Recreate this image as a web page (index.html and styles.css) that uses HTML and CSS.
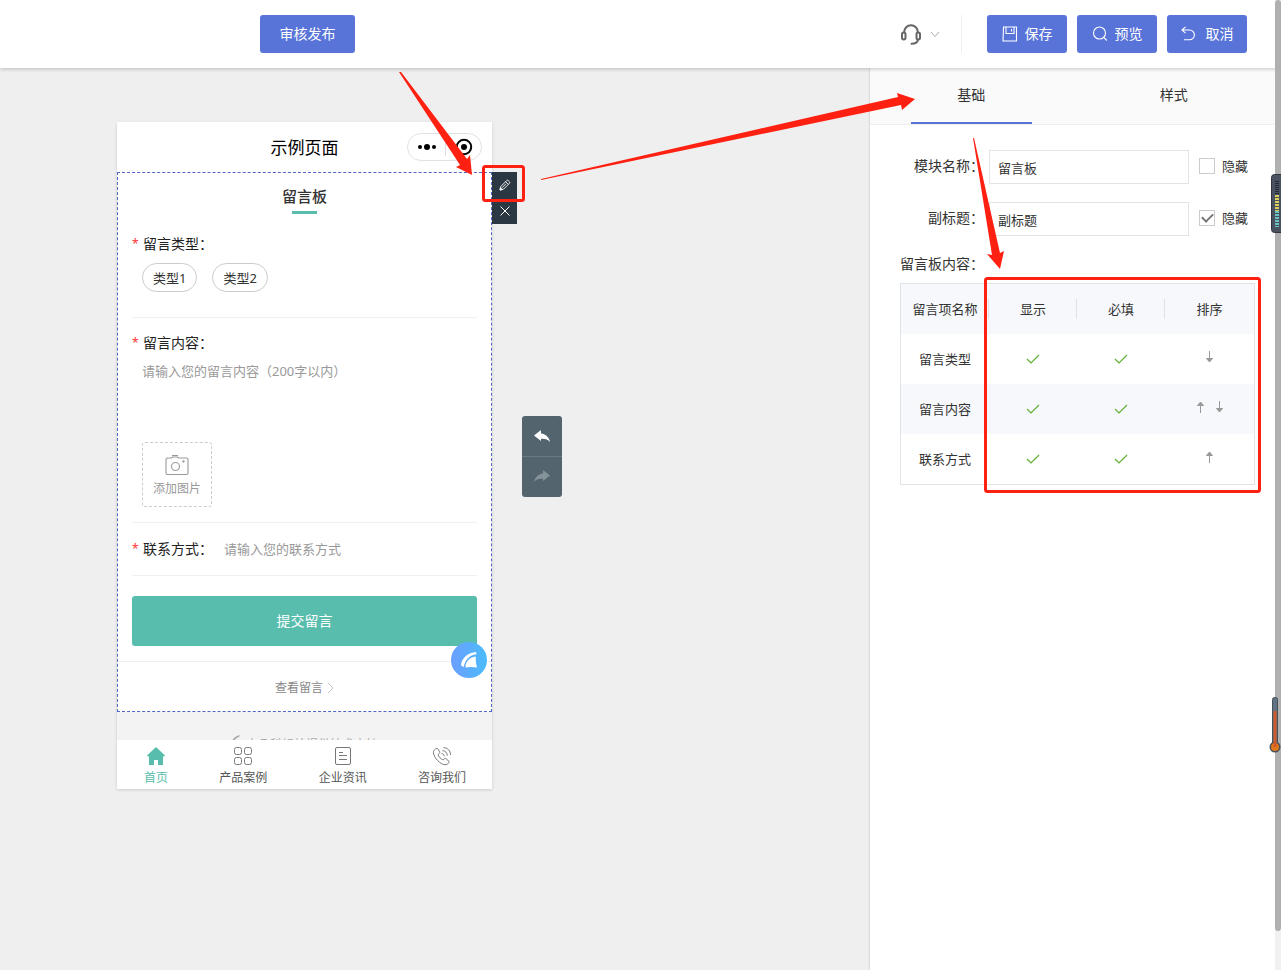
FILE: index.html
```html
<!DOCTYPE html>
<html lang="zh-CN">
<head>
<meta charset="utf-8">
<title>示例页面</title>
<link rel="stylesheet" href="styles.css">
</head>
<body>
<header class="topbar">
  <button class="btn publish" type="button">审核发布</button>
  <div class="top-actions">
    <button class="support" type="button" aria-label="客服">
      <svg width="22" height="22" viewBox="0 0 22 22" fill="none" stroke="#666" stroke-width="2"><path d="M4.200 10V9A6.800 6.800 0 0 1 17.800 9v1"/><rect x="2" y="9.500" width="3.500" height="7" rx="1.700"/><rect x="16.500" y="9.500" width="3.500" height="7" rx="1.700"/><path d="M18 17c-.6 2.400-2.400 3.800-6.500 3.800" stroke-linecap="round"/></svg>
      <svg width="10" height="8" viewBox="0 0 10 8" fill="none" stroke="#aaa"><path d="M1 2l4 4.500 4-4.500"/></svg>
    </button>
    <span class="top-divider"></span>
    <button class="btn" type="button"><svg width="16" height="16" viewBox="0 0 16 16" fill="none" stroke="#fff" stroke-width="1.100"><path d="M1.500 1h13v14H1z"/><path d="M4 1v6.500h8V1M9.500 3v2.500"/></svg>保存</button>
    <button class="btn" type="button"><svg width="16" height="16" viewBox="0 0 16 16" fill="none" stroke="#fff" stroke-width="1.100"><circle cx="7.500" cy="7" r="6"/><path d="M11.800 11.300l3 3.200"/></svg>预览</button>
    <button class="btn cancel" type="button"><svg width="16" height="16" viewBox="0 0 16 16" fill="none" stroke="#fff" stroke-width="1.100"><path d="M4.500 .8L1 4l3.500 3.200M1 4h7.500a4.900 4.900 0 0 1 0 9.800H3"/></svg>取消</button>
  </div>
</header>

<main class="workspace">
  <section class="canvas">
    <div class="phone">
      <div class="phone-head">
        <span>示例页面</span>
        <div class="capsule">
          <svg width="20" height="12" viewBox="0 0 20 12"><circle cx="3" cy="6" r="2"/><circle cx="10" cy="6" r="3"/><circle cx="17" cy="6" r="2"/></svg>
          <i></i>
          <svg width="18" height="18" viewBox="0 0 18 18"><circle cx="9" cy="9" r="7.200" fill="none" stroke="#000" stroke-width="2"/><circle cx="9" cy="9" r="3"/></svg>
        </div>
      </div>
      <form class="module">
        <div class="module-tools">
          <button type="button" aria-label="编辑"><svg width="12" height="12" viewBox="0 0 12 12" fill="none" stroke="#fff" stroke-width=".9"><path d="M1 11l.8-3.500 6-6a1 1 0 0 1 1.400 0l1.300 1.300a1 1 0 0 1 0 1.400l-6 6zM6.600 2.700l2.700 2.700M3 8.800l4-4"/><path d="M1 11l.5-2.200L3.200 10.500z" fill="#fff"/></svg></button>
          <button type="button" aria-label="删除"><svg width="12" height="12" viewBox="0 0 12 12" fill="none" stroke="#fff"><path d="M1.500 1.500l9 9M10.500 1.500l-9 9"/></svg></button>
        </div>
        <h2>留言板</h2>
        <div class="fields">
          <div class="field types">
            <div class="label"><b>*</b>留言类型：</div>
            <div class="pills"><button type="button">类型1</button><button type="button">类型2</button></div>
          </div>
          <div class="field message">
            <label class="label" for="msg"><b>*</b>留言内容：</label>
            <textarea id="msg" placeholder="请输入您的留言内容（200字以内）"></textarea>
            <button class="add-image" type="button">
              <svg width="24" height="22" viewBox="0 0 24 22" fill="none" stroke="#999" stroke-width="1.100"><path d="M7 1.500h6M2.500 4h4l1-1h5l1 1h8a1.500 1.500 0 0 1 1.500 1.500v13.500a1.500 1.500 0 0 1-1.500 1.500h-19A1.500 1.500 0 0 1 1 19V5.500a1.500 1.500 0 0 1 1.500-1.500z"/><circle cx="10.500" cy="12.500" r="4"/><circle cx="18.500" cy="7.500" r=".6" fill="#999"/></svg>
              添加图片
            </button>
          </div>
          <div class="field contact">
            <label class="label" for="contact"><b>*</b>联系方式：</label>
            <input id="contact" type="text" placeholder="请输入您的联系方式">
          </div>
          <button class="submit" type="button">提交留言</button>
        </div>
        <a class="more" href="#">查看留言<svg width="7" height="12" viewBox="0 0 7 12" fill="none" stroke="#ccc"><path d="M1 1l5 5-5 5"/></svg></a>
      </form>
      <div class="powered"><svg width="10" height="10" viewBox="0 0 10 10" fill="#aaa"><path d="M0 9C1 4 4 1 9 0L8 2C5 3 3 5 2 9z"/></svg>由凡科轻站提供技术支持</div>
      <nav class="tabbar">
        <a class="on" href="#"><svg width="20" height="20" viewBox="0 0 20 20" fill="#58bdac"><path d="M10 1l9 8.500-1 1H17V19h-5v-5H8v5H3v-8.500H2l-1-1z"/></svg>首页</a>
        <a href="#"><svg width="20" height="20" viewBox="0 0 20 20" fill="none" stroke="#777"><rect x="1.500" y="1.500" width="7" height="7" rx="2"/><rect x="11.500" y="1.500" width="7" height="7" rx="2"/><rect x="1.500" y="11.500" width="7" height="7" rx="2"/><rect x="11.500" y="11.500" width="7" height="7" rx="2"/></svg>产品案例</a>
        <a href="#"><svg width="20" height="20" viewBox="0 0 20 20" fill="none" stroke="#777"><rect x="2.500" y="1.500" width="15" height="17" rx="1.500"/><path d="M6 6.500h4M6 9.500h8M6 13.500h8"/></svg>企业资讯</a>
        <a href="#"><svg width="20" height="20" viewBox="0 0 20 20" fill="none" stroke="#777" stroke-linejoin="round"><path d="M5.800 2.800C4.600 1.700 1.500 3.700 1.400 6.300c.2 5.500 7.300 12.500 11.700 12.400 2.300-.1 4.700-2 3.900-3.300l-2.900-2.700c-1-.7-1.800.2-2.600 1-1.800.4-5.700-3.600-5.200-5.300.8-.8 1.800-1.600 1.400-2.600z"/><path d="M9.500 7.500c1.800.1 2.600 1.200 2.700 2.800M10.500 4.600c3 .2 4.600 2 4.800 5M11.500 1.600c4.500.4 6.800 3 7.100 7.400"/></svg>咨询我们</a>
      </nav>
      <button class="floating" type="button" aria-label="品牌"><svg width="18" height="18" viewBox="0 0 18 18" fill="#fff"><path d="M1 14.500C1.500 7.500 7 2 16 1l.5 2.200C9.500 4 5 8.500 3.800 16z"/><path d="M5.500 16.500C5.500 10.500 9 6.500 15.800 5.500c-.2 4 .2 7.500 1.200 11-4-.8-8-.7-11.500 0z"/></svg></button>
    </div>
    <div class="history">
      <button type="button" aria-label="撤销"><svg width="18" height="16" viewBox="0 0 18 16" fill="#fff"><path d="M1 7.500L8 2v3.500c5 .5 8 4 9 8.500-2.300-2.800-5-3.500-9-3.200V13z"/></svg></button>
      <button type="button" aria-label="重做"><svg width="18" height="16" viewBox="0 0 18 16" fill="#84929a"><path d="M17 6.500L10 1v3.500C5 5 2 8.500 1 13c2.300-2.800 5-3.500 9-3.200V12z"/></svg></button>
    </div>
  </section>

  <aside class="panel">
    <div class="tabs"><button class="active" type="button">基础</button><button type="button">样式</button></div>
    <div class="settings">
      <div class="row">
        <label class="row-label" for="name">模块名称：</label>
        <input class="text" id="name" type="text" value="留言板">
        <label class="hide"><input type="checkbox">隐藏</label>
      </div>
      <div class="row">
        <label class="row-label" for="sub">副标题：</label>
        <input class="text" id="sub" type="text" value="副标题">
        <label class="hide"><input type="checkbox" checked>隐藏</label>
      </div>
      <div class="table-title">留言板内容：</div>
      <table>
        <colgroup><col class="col"><col class="col"><col class="col"><col></colgroup>
        <thead><tr><th>留言项名称</th><th>显示</th><th>必填</th><th>排序</th></tr></thead>
        <tbody>
          <tr><td>留言类型</td><td><svg class="tick"><use href="#tick"/></svg></td><td><svg class="tick"><use href="#tick"/></svg></td><td><div class="sort"><svg><use href="#down"/></svg></div></td></tr>
          <tr><td>留言内容</td><td><svg class="tick"><use href="#tick"/></svg></td><td><svg class="tick"><use href="#tick"/></svg></td><td><div class="sort"><svg><use href="#up"/></svg><svg><use href="#down"/></svg></div></td></tr>
          <tr><td>联系方式</td><td><svg class="tick"><use href="#tick"/></svg></td><td><svg class="tick"><use href="#tick"/></svg></td><td><div class="sort"><svg><use href="#up"/></svg></div></td></tr>
        </tbody>
      </table>
    </div>
  </aside>
</main>

<div class="scrollbar"><i></i></div>
<svg class="gauge" width="10" height="60" viewBox="0 0 10 60"><rect x=".5" y=".5" width="14" height="58" rx="3" fill="#4a5160" stroke="#30343d"/><path d="M6 7v14" stroke="#242a36" stroke-width="4" stroke-dasharray="1 1"/><path d="M6 21v16" stroke="#d9d05c" stroke-width="4" stroke-dasharray="2 1"/><path d="M6 37v16" stroke="#6cc0bd" stroke-width="4" stroke-dasharray="2 1"/></svg>
<svg class="thermo" width="12" height="56" viewBox="0 0 12 56"><rect x="3.500" y=".5" width="5" height="48" rx="2" fill="#5f7382" stroke="#46515a"/><circle cx="6" cy="50" r="5.500" fill="#46515a"/><circle cx="6" cy="50" r="4" fill="#e2761b"/><path d="M6 14v36" stroke="#cf5a2c" stroke-width="3"/></svg>

<svg class="annotations" width="1281" height="970" viewBox="0 0 1281 970" fill="#fe2112">
  <path d="M399 72L401 72 467 159 470 155 472 175 456 167 460 165z"/>
  <path d="M541 179L898 97 897 93 915 99 902 110 901 105 541 180z"/>
  <path d="M973 138L974 138 1000 253 1004 251 1000 269 987 254 992 255z"/>
  <g fill="none" stroke="#fe2112" stroke-width="3"><rect x="483.500" y="166.500" width="40" height="34" rx="2"/><rect x="985.500" y="278.500" width="274" height="213" rx="2"/></g>
</svg>
<svg class="symbols">
  <symbol id="tick" viewBox="0 0 14 12"><path d="M1 6l4 4 8-8" fill="none" stroke="#62b134" stroke-width="1.200"/></symbol>
  <symbol id="down" viewBox="0 0 9 12"><path d="M4.500 0v11M1.500 7.500h6L4.500 11z" fill="#999" stroke="#999"/></symbol>
  <symbol id="up" viewBox="0 0 9 12"><path d="M4.500 12V1M1.500 4.500h6L4.500 1z" fill="#999" stroke="#999"/></symbol>
</svg>
</body>
</html>
```

FILE: styles.css
```css
* { box-sizing: border-box; }
body {
  margin: 0;
  height: 100vh;
  display: flex;
  flex-direction: column;
  overflow: hidden;
  position: relative;
  font: 14px/20px "Noto Sans", "Noto Sans CJK SC", sans-serif;
  color: #333;
  background: #efefef;
}
button, input, textarea { font: inherit; color: inherit; margin: 0; }
button { border: 0; padding: 0; background: none; cursor: pointer; }
a { color: inherit; text-decoration: none; }
svg { display: block; flex: none; }

.topbar {
  flex: none;
  height: 68px;
  padding: 0 34px 0 260px;
  display: flex;
  align-items: center;
  justify-content: space-between;
  background: #fff;
  box-shadow: 0 1px 4px rgba(0, 0, 0, .22);
  z-index: 2;
}
.btn {
  height: 38px;
  width: 80px;
  display: flex;
  align-items: center;
  justify-content: center;
  gap: 7px;
  border-radius: 3px;
  background: #5874d8;
  color: #fff;
}
.publish { width: 95px; }
.cancel { gap: 9px; }
.top-actions { display: flex; align-items: center; gap: 10px; }
.support { display: flex; align-items: center; gap: 8px; }
.top-divider { width: 1px; height: 38px; margin: 0 15px 0 11px; background: #eee; }

.workspace { flex: 1; display: flex; min-height: 0; }
.canvas {
  flex: 1;
  padding: 54px 0 0 117px;
  display: flex;
  align-items: flex-start;
  gap: 30px;
}
.phone {
  width: 375px;
  position: relative;
  background: #fff;
  box-shadow: 0 1px 3px rgba(0, 0, 0, .15);
}
.phone-head {
  height: 50px;
  padding-top: 2px;
  display: flex;
  align-items: center;
  justify-content: center;
  font-size: 17px;
  color: #000;
}
.capsule {
  position: absolute;
  right: 10px;
  top: 11px;
  width: 75px;
  height: 28px;
  display: flex;
  align-items: center;
  justify-content: space-evenly;
  border: 1px solid #e2e2e6;
  border-radius: 14px;
}
.capsule i { width: 1px; height: 18px; background: #ddd; }

.module { position: relative; border: 1px dashed #4f66c4; padding-top: 11px; }
.module-tools {
  position: absolute;
  left: 100%;
  top: -1px;
  width: 26px;
  padding-left: 1px;
  display: grid;
  grid-auto-rows: 26px;
  background: #2b3742;
  background-clip: content-box;
}
.module-tools button { display: grid; place-items: center; }
.module h2 {
  margin: 0;
  display: flex;
  flex-direction: column;
  align-items: center;
  gap: 3px;
  font-size: 15px;
  line-height: 24px;
  font-weight: 500;
}
.module h2::after { content: ""; width: 25px; height: 3px; background: #58bdac; }
.fields { padding: 0 14px 15px; border-bottom: 1px solid #eee; }
.field { border-bottom: 1px solid #f0f0f0; }
.label { display: flex; color: #222; }
.label b { width: 11px; font-size: 12px; font-weight: 400; color: #f33; }
.types { padding: 20px 0 25px; }
.pills { display: flex; gap: 15px; padding: 9px 10px 0; }
.pills button {
  height: 29px;
  padding: 0 10px;
  border: 1px solid #ccc;
  border-radius: 15px;
  font-size: 13px;
}
.message { padding: 15px 0; }
.message textarea {
  display: block;
  width: 320px;
  height: 73px;
  margin: 8px 10px;
  padding: 0;
  border: 0;
  resize: none;
  font-size: 13px;
}
::placeholder { color: #999; opacity: 1; }
.add-image {
  width: 70px;
  height: 65px;
  margin-left: 10px;
  padding-top: 3px;
  display: flex;
  flex-direction: column;
  align-items: center;
  justify-content: center;
  gap: 3px;
  border: 1px dashed #ccc;
  border-radius: 3px;
  font-size: 12px;
  color: #999;
}
.contact { display: flex; align-items: center; height: 53px; gap: 11px; }
.contact input { flex: 1; min-width: 0; padding: 0; border: 0; font-size: 13px; }
.submit {
  width: 100%;
  height: 50px;
  margin-top: 20px;
  display: block;
  border-radius: 3px;
  background: #58bdac;
  color: #fff;
}
.more {
  height: 49px;
  padding-top: 2px;
  display: flex;
  align-items: center;
  justify-content: center;
  gap: 4px;
  font-size: 12px;
  color: #888;
}
.powered {
  height: 28px;
  padding-top: 23px;
  display: flex;
  justify-content: center;
  gap: 5px;
  overflow: hidden;
  background: #f3f3f3;
  color: #aaa;
  font-size: 12px;
}
.tabbar { height: 49px; display: flex; justify-content: space-between; padding: 6px 26px 0 27px; }
.tabbar a {
  display: flex;
  flex-direction: column;
  align-items: center;
  gap: 2px;
  font-size: 12px;
  color: #555;
}
.tabbar .on { color: #58bdac; }
.floating {
  position: absolute;
  right: 5px;
  bottom: 111px;
  width: 36px;
  height: 36px;
  display: grid;
  place-items: center;
  border-radius: 50%;
  background: linear-gradient(90deg, #6c9eff, #4bbcfc);
}

.history {
  width: 40px;
  margin-top: 294px;
  border-radius: 3px;
  background: #54646e;
}
.history button { width: 100%; height: 40px; display: grid; place-items: center; }
.history button + button { height: 41px; border-top: 1px solid #6b7982; }

.panel {
  width: 411px;
  flex: none;
  padding-right: 6px;
  background: #fff;
  box-shadow: 0 0 2px rgba(0, 0, 0, .25);
}
.tabs { height: 57px; display: flex; background: #fafafa; border-bottom: 1px solid #eee; }
.tabs button { flex: 1; display: grid; grid-template-rows: 1fr 2px; place-items: center; }
.tabs .active::after { content: ""; width: 60%; height: 2px; background: #5874d8; }
.settings { padding: 25px 20px 0 30px; }
.row { display: flex; align-items: center; height: 34px; margin-bottom: 18px; }
.row-label { width: 84px; margin-right: 5px; padding-bottom: 2px; text-align: right; }
.text {
  width: 200px;
  height: 34px;
  padding: 0 8px;
  border: 1px solid #e3e3e3;
  font-size: 13px;
}
.hide {
  margin-left: 10px;
  padding-bottom: 2px;
  display: flex;
  align-items: center;
  gap: 7px;
  font-size: 13px;
  white-space: nowrap;
}
.hide input {
  appearance: none;
  width: 16px;
  height: 16px;
  border: 1px solid #ccc;
  display: grid;
  place-items: center;
}
.hide input:checked::after {
  content: "";
  width: 9px;
  height: 5px;
  margin-bottom: 3px;
  border: solid #777;
  border-width: 0 0 2px 2px;
  transform: rotate(-45deg);
}
.table-title { margin-bottom: 9px; }
table {
  width: 100%;
  table-layout: fixed;
  border: 1px solid #dfe4e8;
  border-collapse: separate;
  border-spacing: 0;
  font-size: 13px;
}
.col { width: 88px; }
th, td { height: 50px; padding: 0; text-align: center; font-weight: 400; }
th { background: linear-gradient(#dfe3e8, #dfe3e8) right center / 1px 20px no-repeat; }
th:last-child { background: none; }
thead tr, tbody tr:nth-child(2) { background: #f6f8fb; }
.tick { width: 14px; height: 12px; margin: 0 auto; }
.sort { display: flex; justify-content: center; gap: 10px; padding-bottom: 4px; }
.sort svg { width: 9px; height: 12px; }

.scrollbar { position: absolute; z-index: 3; right: 0; top: 0; bottom: 0; width: 6px; background: #f1f1f1; }
.scrollbar i { display: block; height: 96%; border-radius: 3px; background: #b0b0b0; }
.gauge { position: absolute; z-index: 4; right: 0; top: 174px; }
.thermo { position: absolute; z-index: 4; right: 0; top: 697px; }
.annotations { position: absolute; z-index: 5; left: 0; top: 0; pointer-events: none; }
.symbols { position: absolute; width: 0; height: 0; }
```
